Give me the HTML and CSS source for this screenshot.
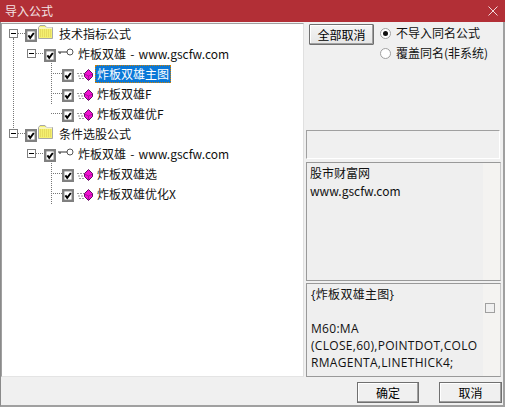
FILE: index.html
```html
<!DOCTYPE html>
<html lang="zh">
<head>
<meta charset="utf-8">
<title>导入公式</title>
<link rel="stylesheet" href="styles.css">
</head>
<body>
<svg class="defs" width="0" height="0">
  <symbol id="check" viewBox="0 0 12 13"><rect x="1.200" y="1.200" width="9.600" height="10.600" fill="#fff" stroke="#808080" stroke-width="2.400"/><path d="M3.400 6.400 5.200 8.800 8.800 4" fill="none" stroke="#000" stroke-width="1.900"/></symbol>
  <symbol id="folder" viewBox="0 0 16 15"><path d="M.5 13.500V2.500L2 .5H7L8.500 2.500H14.500V13.500Z" fill="#f4f070" stroke="#a8a8a8"/><path d="M1 3H14" stroke="#fff"/><path d="M2 5H14M2 7H14M2 9H14M2 11H14" stroke="#d8c850" stroke-dasharray="1 1"/></symbol>
  <symbol id="key" viewBox="0 0 16 9"><circle cx="12" cy="4" r="3" fill="#fff" stroke="#555"/><path d="M0 4H9M2 4V6" stroke="#333" stroke-width="1.100" fill="none"/></symbol>
  <symbol id="gem" viewBox="0 0 16 12"><path d="M0 4.500H7M1 7H7M2 9.500H7" stroke="#999" stroke-dasharray="2 1" fill="none"/><path d="M11.500 .5 15.500 4.500V7.500L11.500 11.500 7.500 7.500V4.500Z" fill="#f010d0" stroke="#601060"/><path d="M7.500 5 11.500 7 15.500 5M11.500 7V11" stroke="#801080" fill="none" stroke-width=".6"/></symbol>
</svg>
<div class="window">
  <header class="titlebar">
    <span class="title">导入公式</span>
    <svg class="close" width="10" height="10" viewBox="0 0 10 10"><path d="M.5.500 9.500 9.500M9.500.500.500 9.500" stroke="#f0d8da" stroke-width="1"/></svg>
  </header>
  <div class="content">
    <div class="tree">
      <div class="row lvl0">
        <span class="exp"></span>
        <svg class="cb"><use href="#check"/></svg>
        <svg class="folder"><use href="#folder"/></svg>
        <span class="label">技术指标公式</span>
      </div>
      <div class="row lvl1">
        <span class="exp"></span>
        <svg class="cb"><use href="#check"/></svg>
        <svg class="key"><use href="#key"/></svg>
        <span class="label">炸板双雄 - www.gscfw.com</span>
      </div>
      <div class="row lvl2">
        <svg class="cb"><use href="#check"/></svg>
        <svg class="gem"><use href="#gem"/></svg>
        <span class="label selected">炸板双雄主图</span>
      </div>
      <div class="row lvl2">
        <svg class="cb"><use href="#check"/></svg>
        <svg class="gem"><use href="#gem"/></svg>
        <span class="label">炸板双雄F</span>
      </div>
      <div class="row lvl2 last">
        <svg class="cb"><use href="#check"/></svg>
        <svg class="gem"><use href="#gem"/></svg>
        <span class="label">炸板双雄优F</span>
      </div>
      <div class="row lvl0">
        <span class="exp"></span>
        <svg class="cb"><use href="#check"/></svg>
        <svg class="folder"><use href="#folder"/></svg>
        <span class="label">条件选股公式</span>
      </div>
      <div class="row lvl1">
        <span class="exp"></span>
        <svg class="cb"><use href="#check"/></svg>
        <svg class="key"><use href="#key"/></svg>
        <span class="label">炸板双雄 - www.gscfw.com</span>
      </div>
      <div class="row lvl2">
        <svg class="cb"><use href="#check"/></svg>
        <svg class="gem"><use href="#gem"/></svg>
        <span class="label">炸板双雄选</span>
      </div>
      <div class="row lvl2 last">
        <svg class="cb"><use href="#check"/></svg>
        <svg class="gem"><use href="#gem"/></svg>
        <span class="label">炸板双雄优化X</span>
      </div>
    </div>
    <div class="side">
      <div class="options">
        <button class="btn cancel-all">全部取消</button>
        <div class="radios">
          <div class="radio-row"><span class="radio on"></span>不导入同名公式</div>
          <div class="radio-row"><span class="radio"></span>覆盖同名(非系统)</div>
        </div>
      </div>
      <div class="blank"></div>
      <div class="info">股市财富网<br>www.gscfw.com</div>
      <div class="formula">
        <div class="formula-text">{炸板双雄主图}<br><br>M60:MA<br>(CLOSE,60),POINTDOT,COLO<br>RMAGENTA,LINETHICK4;</div>
        <span class="small-box"></span>
      </div>
    </div>
  </div>
  <footer class="footer">
    <button class="btn ok">确定</button>
    <button class="btn cancel">取消</button>
  </footer>
</div>
</body>
</html>
```
FILE: styles.css
```css
* { box-sizing: border-box; }
html, body { margin: 0; padding: 0; }
body { width: 505px; height: 407px; overflow: hidden; background: #f0f0f0; font-family: "Noto Sans CJK SC", "Liberation Sans", sans-serif; font-size: 12px; color: #000; }
.defs { position: absolute; }
.window { width: 505px; height: 407px; display: flex; flex-direction: column; border-left: 1px solid #8a8a8a; border-right: 2px solid #a0a0a0; border-bottom: 2px solid #a0a0a0; }
.titlebar { height: 22px; margin: 0 -2px 0 -1px; flex: none; background: #b22f36; display: flex; align-items: center; justify-content: space-between; padding: 0 6px 1px 5px; color: #f3e3e4; }
.title { font-size: 12px; line-height: 16px; }
.close { margin-right: 1px; }
.content { flex: none; height: 355px; display: flex; gap: 2px; padding-top: 1px; }
.tree { width: 303px; height: 354px; background: #fff; border: 1px solid #a0a0a0; border-right-color: #e0e0e0; border-bottom-color: #e4e4e4; }
.row { height: 20px; position: relative; display: flex; align-items: center; }
.lvl0 { padding-left: 23px; }
.lvl1 { padding-left: 42px; }
.lvl2 { padding-left: 60px; }
.exp { position: absolute; top: 5px; width: 9px; height: 9px; border: 1px solid #808080; background: #fff; }
.exp::after { content: ""; position: absolute; left: 1px; top: 3px; width: 5px; height: 1px; background: #000; }
.lvl0 .exp { left: 7px; }
.lvl1 .exp { left: 25px; }
.lvl0::before, .lvl1::before { content: ""; position: absolute; top: 9px; width: 7px; border-top: 1px dotted #777; }
.lvl0::before { left: 16px; }
.lvl1::before { left: 34px; }
.lvl0::after { content: ""; position: absolute; left: 11px; top: 14px; height: 100px; border-left: 1px dotted #777; }
.row.lvl0:nth-child(6)::after { height: 14px; border: 0; }
.lvl1::after { content: ""; position: absolute; left: 49px; top: 16px; height: 44px; border-left: 1px dotted #777; }
.lvl2::before { content: ""; position: absolute; left: 49px; top: 9px; width: 11px; border-top: 1px dotted #777; }
.cb { width: 12px; height: 13px; flex: none; margin-top: 3px; }
.folder { width: 16px; height: 15px; flex: none; margin: -3px 0 0 1px; }
.key { width: 16px; height: 9px; flex: none; margin: -3px 0 0 2px; }
.gem { width: 16px; height: 12px; flex: none; margin: 1px 0 0 3px; }
.label { font-size: 12px; line-height: 18px; white-space: nowrap; margin-left: 5px; color: #111; }
.lvl1 .label { margin-left: 4px; word-spacing: 1.500px; }
.lvl2 .label { margin-left: 2px; padding: 0 2px; }
.selected { background: #0a78d7; color: #fff; outline: 1px dotted #d08000; outline-offset: -1px; }
.side { width: 195px; height: 354px; display: flex; flex-direction: column; }
.options { height: 107px; display: flex; gap: 6px; padding: 1px 0 0 3px; }
.btn { font-family: inherit; font-size: 12px; color: #000; background: #f0f0f0; border: 1px solid #707070; padding: 0; box-shadow: inset -1px -1px 0 #a0a0a0, inset 1px 1px 0 #fff; }
.cancel-all { width: 65px; height: 21px; background: linear-gradient(#f4f4f4, #e6e6e6); border-radius: 1px; }
.radios { display: flex; flex-direction: column; gap: 2px; }
.radio-row { height: 18px; display: flex; align-items: center; gap: 5px; line-height: 18px; white-space: nowrap; color: #111; }
.radio { width: 11px; height: 11px; border-radius: 50%; background: #fff; border: 1px solid #a0a0a0; position: relative; flex: none; }
.radio.on::after { content: ""; position: absolute; left: 2px; top: 2px; width: 5px; height: 5px; border-radius: 50%; background: #111; }
.blank { height: 29px; border: 1px solid #a0a0a0; border-right-color: #fff; border-bottom-color: #fff; margin-right: 1px; flex: none; }
.info { height: 119px; flex: none; margin-top: 3px; border: 1px solid #999; border-right: 1px solid #c8c8c8; background: linear-gradient(90deg, #efefef 176px, #f4f3f1 176px); padding: 1px 3px; line-height: 18px; color: #111; }
.formula { height: 94px; flex: none; margin-top: 2px; position: relative; border: 1px solid #999; border-right: 1px solid #c8c8c8; background: linear-gradient(90deg, #efefef 176px, #f4f3f1 176px); padding: 2px 3px 0 4px; line-height: 17px; color: #111; }
.formula-text { white-space: nowrap; font-family: "Open Sans", "Noto Sans CJK SC", sans-serif; font-size: 12px; letter-spacing: .3px; }
.small-box { position: absolute; right: 5px; top: 19px; width: 10px; height: 10px; border: 1px solid #a0a0a0; background: #f0f0f0; }
.footer { flex: 1; display: flex; justify-content: flex-end; gap: 20px; padding: 5px 1px 0 0; }
.ok, .cancel { height: 21px; }
.ok { width: 62px; }
.cancel { width: 63px; }
```
